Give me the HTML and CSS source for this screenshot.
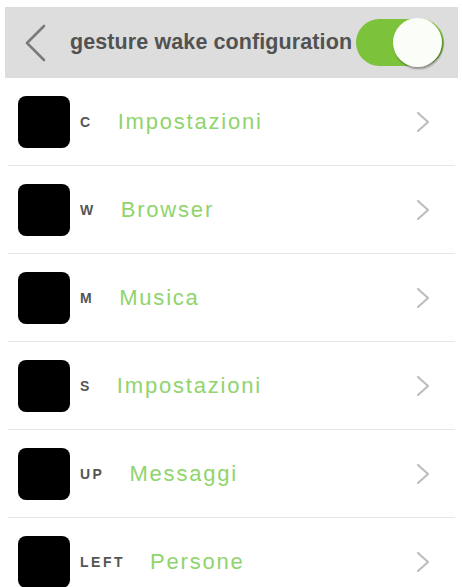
FILE: index.html
```html
<!DOCTYPE html>
<html>
<head>
<meta charset="utf-8">
<link rel="stylesheet" href="styles.css">
</head>
<body>
<div class="header">
  <svg class="back" width="24" height="40" viewBox="0 0 24 40"><path d="M21 3 L4 20 L21 37" fill="none" stroke="#7a7a7a" stroke-width="2.6" stroke-linecap="round" stroke-linejoin="round"/></svg>
  <span class="title">gesture wake configuration</span>
  <div class="toggle"><div class="knob"></div></div>
</div>
<div class="list">
  <div class="row"><div class="icon"></div><span class="key">C</span><span class="label">Impostazioni</span><svg class="chev" width="16" height="22" viewBox="0 0 16 22"><path d="M3 2 L13 11 L3 20" fill="none" stroke="#bdbdbd" stroke-width="2.2" stroke-linecap="round" stroke-linejoin="round"/></svg></div>
  <div class="row"><div class="icon"></div><span class="key">W</span><span class="label">Browser</span><svg class="chev" width="16" height="22" viewBox="0 0 16 22"><path d="M3 2 L13 11 L3 20" fill="none" stroke="#bdbdbd" stroke-width="2.2" stroke-linecap="round" stroke-linejoin="round"/></svg></div>
  <div class="row"><div class="icon"></div><span class="key">M</span><span class="label">Musica</span><svg class="chev" width="16" height="22" viewBox="0 0 16 22"><path d="M3 2 L13 11 L3 20" fill="none" stroke="#bdbdbd" stroke-width="2.2" stroke-linecap="round" stroke-linejoin="round"/></svg></div>
  <div class="row"><div class="icon"></div><span class="key">S</span><span class="label">Impostazioni</span><svg class="chev" width="16" height="22" viewBox="0 0 16 22"><path d="M3 2 L13 11 L3 20" fill="none" stroke="#bdbdbd" stroke-width="2.2" stroke-linecap="round" stroke-linejoin="round"/></svg></div>
  <div class="row"><div class="icon"></div><span class="key">UP</span><span class="label">Messaggi</span><svg class="chev" width="16" height="22" viewBox="0 0 16 22"><path d="M3 2 L13 11 L3 20" fill="none" stroke="#bdbdbd" stroke-width="2.2" stroke-linecap="round" stroke-linejoin="round"/></svg></div>
  <div class="row"><div class="icon"></div><span class="key">LEFT</span><span class="label">Persone</span><svg class="chev" width="16" height="22" viewBox="0 0 16 22"><path d="M3 2 L13 11 L3 20" fill="none" stroke="#bdbdbd" stroke-width="2.2" stroke-linecap="round" stroke-linejoin="round"/></svg></div>
</div>
</body>
</html>
```
FILE: styles.css
```css
html, body {
  margin: 0;
  padding: 0;
  background: #fff;
  font-family: "Liberation Sans", Arial, sans-serif;
  overflow: hidden;
}
.header {
  margin: 7px 4px 0 5px;
  height: 71px;
  background: #dddddd;
  display: flex;
  align-items: center;
  box-sizing: border-box;
  padding-left: 18px;
}
.back {
  flex: none;
}
.title {
  margin-left: 23px;
  font-size: 21.5px;
  font-weight: bold;
  color: #525252;
  letter-spacing: 0.1px;
  white-space: nowrap;
  width: 286px;
}
.toggle {
  flex: none;
  width: 88px;
  height: 47px;
  border-radius: 24px;
  background: #7cc23b;
  display: flex;
  align-items: center;
  justify-content: flex-end;
  padding-right: 2px;
  box-sizing: border-box;
}
.knob {
  width: 49px;
  height: 49px;
  border-radius: 50%;
  background: #fbfdf8;
  box-shadow: 1px 2px 2px rgba(0,0,0,0.35);
}
.list {
  margin: 0 7px 0 8px;
}
.row {
  height: 87px;
  border-bottom: 1px solid #e6e6e6;
  display: flex;
  align-items: center;
  padding-left: 10px;
}
.icon {
  flex: none;
  width: 52px;
  height: 52px;
  border-radius: 8px;
  background: #000;
}
.key {
  margin-left: 10px;
  font-size: 14px;
  font-weight: bold;
  color: #555;
  letter-spacing: 2.5px;
  margin-right: 25px;
}
.label {
  font-size: 22px;
  color: #8fd46c;
  letter-spacing: 1.8px;
  flex: 1;
}
.chev {
  flex: none;
  margin-right: 24px;
}
```
